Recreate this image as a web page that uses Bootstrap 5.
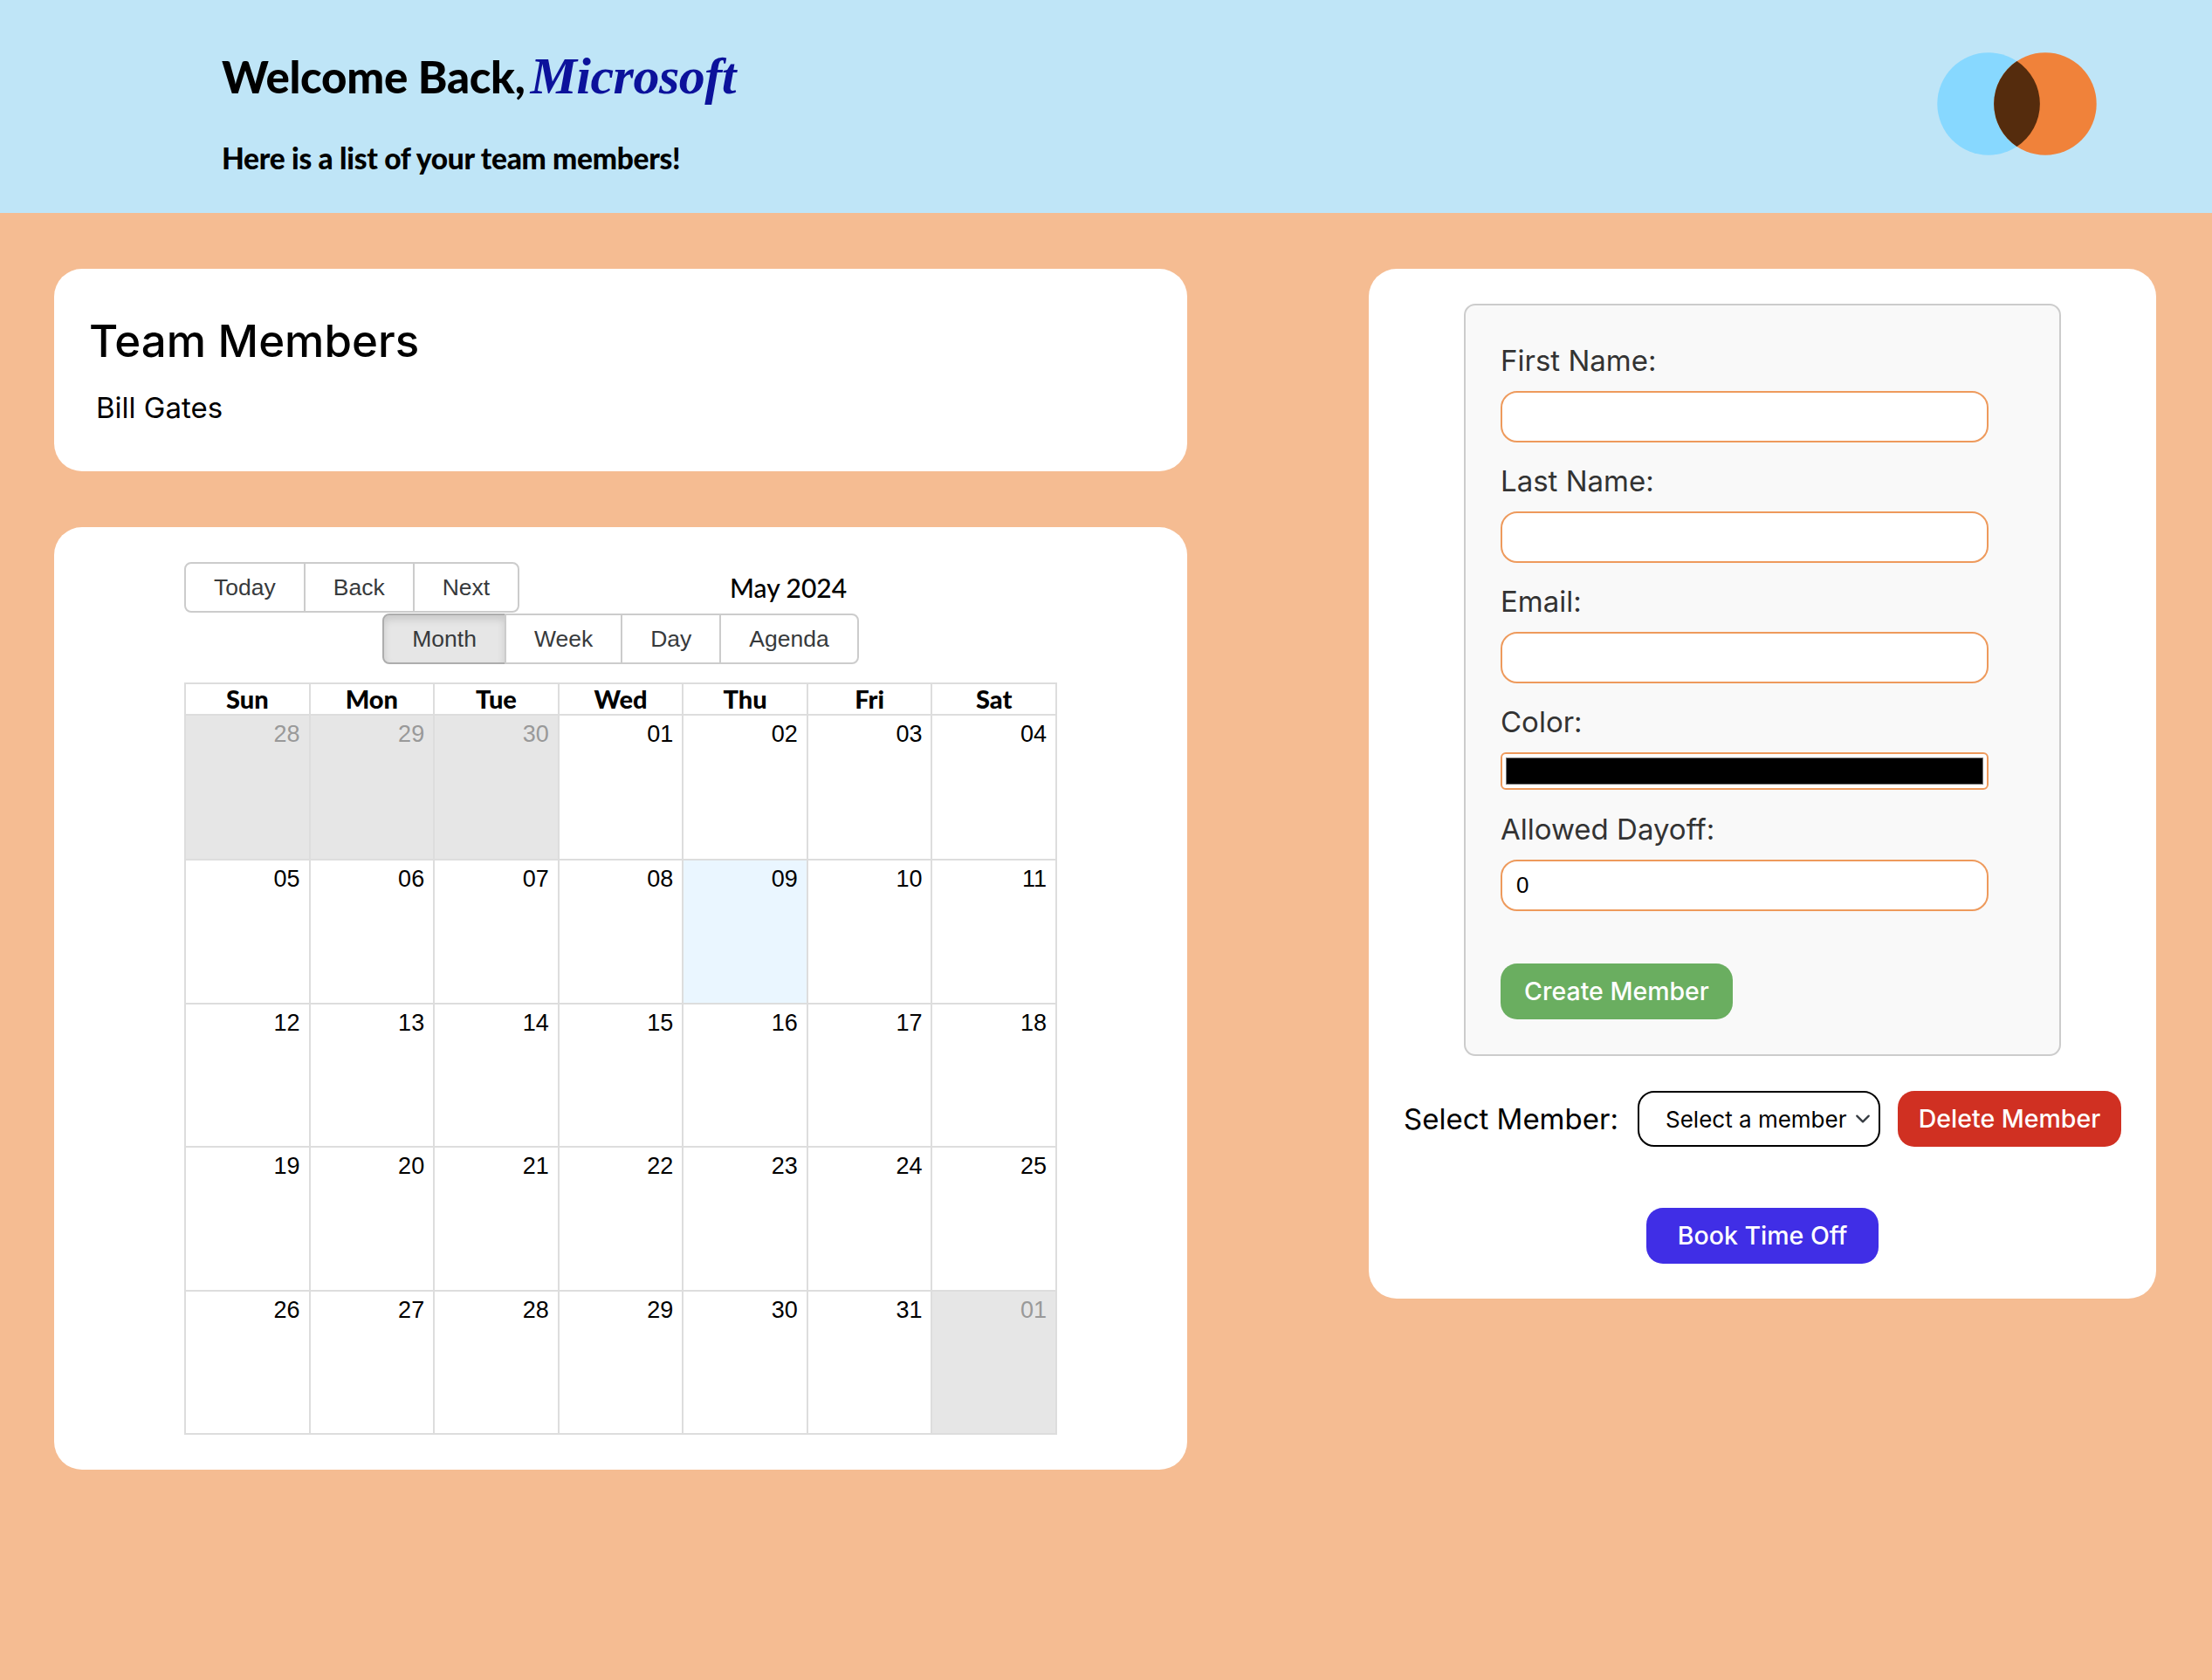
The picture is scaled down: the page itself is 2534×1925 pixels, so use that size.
<!DOCTYPE html>
<html lang="en">
<head>
  <meta charset="UTF-8">
  <title>Team Members</title>
  <link href="https://cdn.jsdelivr.net/npm/bootstrap@5.3.3/dist/css/bootstrap.min.css" rel="stylesheet">
  <style>
    body { background: #f5bc92; font-family: Inter, sans-serif; min-height: 1925px; color: #000; }
    .top-bar { background: #bfe5f7; height: 244px; padding: 0 132px 0 254px; }
    .welcome { font-family: Lato, sans-serif; font-weight: 900; font-size: 51px; line-height: 60px; letter-spacing: -0.3px; margin: 57px 0 0; }
    .company { font-family: "Liberation Serif", serif; font-style: italic; font-weight: 700; color: #0c129b; font-size: 60px; letter-spacing: -0.5px; margin-left: 6px; }
    .subtitle { font-family: Lato, sans-serif; font-weight: 900; font-size: 33.5px; line-height: 40px; letter-spacing: -0.3px; margin: 43px 0 0; }
    .logo-venn { margin-top: -7px; }
    .page-body { padding: 64px 64px 0 62px; }
    .left-side { width: 1298px; }
    .right-side { width: 902px; }
    .panel { background: #fff; border: 0; border-radius: 32px; }
    .members-panel { height: 232px; padding: 53px 40px 0; margin-bottom: 64px; }
    .members-panel h2 { font-size: 51px; line-height: 60px; font-weight: 500; letter-spacing: 0; margin: 0 0 24px; }
    .member-name { font-size: 33px; line-height: 44px; padding-left: 8px; }
    .calendar-panel { height: 1080px; padding: 40px 149px 0; width: 1298px; }
    .cal-toolbar { font-family: "Liberation Sans", sans-serif; flex-wrap: wrap; }
    .cal-label { flex-grow: 1; text-align: center; font-family: Lato, sans-serif; font-weight: 500; font-size: 30px; }
    .cal-btn { font-size: 26.5px; color: #373a3c; background: #fff; border: 2px solid #ccc; padding: 0 32px; height: 58px; line-height: 54px; border-radius: 0; }
    .cal-btn + .cal-btn { margin-left: -2px; }
    .cal-btn:first-child { border-radius: 8px 0 0 8px; }
    .cal-btn:last-child { border-radius: 0 8px 8px 0; }
    .cal-btn.on { background: #e6e6e6; border-color: #adadad; box-shadow: inset 0 5px 8px rgba(0,0,0,.125); }
    .cal-views { margin-top: 1px; }
    .cal-grid { margin-top: 21px; border: 2px solid #ddd; font-family: "Liberation Sans", sans-serif; }
    .cal-head { height: 36px; border-bottom: 2px solid #ddd; }
    .cal-head > div { flex: 1 1 0; text-align: center; font-family: Lato, sans-serif; font-weight: 900; font-size: 29px; line-height: 34px; }
    .cal-head > div + div, .cal-week > div + div { border-left: 2px solid #ddd; }
    .cal-week { height: 164.4px; }
    .cal-week + .cal-week { border-top: 2px solid #ddd; }
    .cal-week > div { flex: 1 1 0; text-align: right; font-size: 27px; line-height: 30px; padding: 6px 10px 0 0; }
    .cal-week > .off { background: #e6e6e6; color: #999; }
    .cal-week > .today { background: #eaf6ff; }
    .form-panel { height: 1180px; padding: 40px 40px 0; }
    .member-form { width: 684px; height: 862px; margin: 0 auto; background: #f9f9f9; border: 2px solid #ccc; border-radius: 13px; padding: 41px 40px 0; }
    .member-form label { display: block; font-size: 33px; line-height: 44px; color: #333; margin: 0 0 13px; }
    .member-form .form-control { width: 559px; height: 59px; border: 2px solid #ee9a5c; border-radius: 19px; font-family: "Liberation Sans", sans-serif; font-size: 26px; color: #000; padding: 0 16px; margin-bottom: 22px; box-shadow: none; background-color: #fff; }
    .member-form .color-box { height: 43px; padding: 4px; border-radius: 6px; margin-bottom: 23px; }
    .member-form .form-control:last-of-type { margin-bottom: 0; }
    .btn-solid { color: #fff; border: 0; border-radius: 19px; height: 64px; font-size: 28.5px; line-height: 64px; padding: 0; font-weight: 500; white-space: nowrap; }
    .btn-solid:hover { color: #fff; }
    .btn-create { background: #6aae60; width: 266px; margin-top: 60px; }
    .btn-delete { background: #d03022; width: 256px; }
    .btn-book { background: #402ee6; width: 266px; }
    .select-row { margin-top: 40px; }
    .select-label { width: 268px; flex: none; font-size: 33px; line-height: 64px; white-space: nowrap; }
    .member-select { width: 278px; flex: none; height: 64px; border: 2px solid #000; border-radius: 19px; font-size: 26px; color: #000; padding: 0 30px; margin-right: 20px; background-position: right 6px center; background-size: 24px 18px; }
    .book-row { margin-top: 70px; }
  </style>
</head>
<body>

  <header class="top-bar d-flex justify-content-between align-items-center">
    <div class="align-self-start">
      <h1 class="welcome">Welcome Back,<span class="company">Microsoft</span></h1>
      <p class="subtitle">Here is a list of your team members!</p>
    </div>
    <svg class="logo-venn" width="183" height="118" viewBox="0 0 183 118" role="img" aria-label="Logo">
      <circle cx="59" cy="59" r="58.7" fill="#87d8ff"/>
      <circle cx="124" cy="59" r="58.7" fill="#f0823a"/>
      <path d="M91.5 10 A58.7 58.7 0 0 0 91.5 108 A58.7 58.7 0 0 0 91.5 10 Z" fill="#552c0d"/>
    </svg>
  </header>

  <div class="page-body d-flex justify-content-between align-items-start">
    <div class="left-side">
      <div class="panel members-panel">
        <h2>Team Members</h2>
        <div class="member-name">Bill Gates</div>
      </div>
      <div class="panel calendar-panel">
        <div class="cal-toolbar d-flex justify-content-center">
          <div class="d-flex">
            <button class="cal-btn">Today</button>
            <button class="cal-btn">Back</button>
            <button class="cal-btn">Next</button>
          </div>
          <div class="cal-label align-self-center">May 2024</div>
          <div class="d-flex cal-views">
            <button class="cal-btn on">Month</button>
            <button class="cal-btn">Week</button>
            <button class="cal-btn">Day</button>
            <button class="cal-btn">Agenda</button>
          </div>
        </div>
        <div id="cal-grid" class="cal-grid"></div>
      </div>
    </div>

    <div class="right-side">
      <div class="panel form-panel">
        <form class="member-form">
          <label for="first">First Name:</label>
          <input id="first" class="form-control" type="text">
          <label for="last">Last Name:</label>
          <input id="last" class="form-control" type="text">
          <label for="email">Email:</label>
          <input id="email" class="form-control" type="email">
          <label for="color">Color:</label>
          <input id="color" class="form-control color-box" type="color" value="#000000">
          <label for="dayoff">Allowed Dayoff:</label>
          <input id="dayoff" class="form-control" type="number" value="0">
          <button type="button" class="btn btn-solid btn-create">Create Member</button>
        </form>
        <div class="select-row d-flex align-items-center">
          <span class="select-label">Select Member:</span>
          <select class="form-select member-select"><option>Select a member</option></select>
          <button class="btn btn-solid btn-delete">Delete Member</button>
        </div>
        <div class="book-row d-flex justify-content-center">
          <button class="btn btn-solid btn-book">Book Time Off</button>
        </div>
      </div>
    </div>
  </div>

<script>
  const grid = document.getElementById('cal-grid');
  const dayNames = ['Sun', 'Mon', 'Tue', 'Wed', 'Thu', 'Fri', 'Sat'];
  const pad = n => String(n).padStart(2, '0');

  let html = '<div class="cal-head d-flex">' + dayNames.map(d => `<div>${d}</div>`).join('') + '</div>';

  // April 28 to June 1
  const days = [[28, 'off'], [29, 'off'], [30, 'off']];
  for (let i = 1; i <= 31; i++) days.push([i, i === 9 ? 'today' : '']);
  days.push([1, 'off']);

  for (let w = 0; w < 5; w++) {
    html += '<div class="cal-week d-flex">';
    days.slice(w * 7, w * 7 + 7).forEach(d => {
      html += `<div class="${d[1]}">${pad(d[0])}</div>`;
    });
    html += '</div>';
  }
  grid.innerHTML = html;
</script>
</body>
</html>
